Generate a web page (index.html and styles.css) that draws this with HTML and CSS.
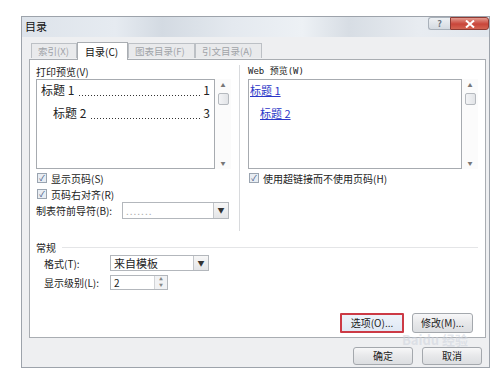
FILE: index.html
```html
<!DOCTYPE html>
<html lang="zh-CN">
<head>
  <meta charset="UTF-8">
  <title>目录</title>
  <link rel="stylesheet" href="styles.css">
</head>
<body>
  <div class="dialog">
    <div class="titlebar">
      <span class="title">目录</span>
      <div class="caption-btns">
        <span class="cap-help">?</span>
        <span class="cap-close">
          <svg width="10" height="8" viewBox="0 0 10 8"><path d="M1 0.5 L9 7.5 M9 0.5 L1 7.5" stroke="#fff" stroke-width="2"/></svg>
        </span>
      </div>
    </div>

    <div class="body">
      <div class="tabs">
        <span class="tab">索引(<u>X</u>)</span>
        <span class="tab active">目录(<u>C</u>)</span>
        <span class="tab">图表目录(<u>F</u>)</span>
        <span class="tab">引文目录(<u>A</u>)</span>
      </div>

      <div class="panel">
        <div class="previews">
          <div class="col col-left">
            <div class="label">打印预览(<u>V</u>)</div>
            <div class="preview-row">
              <div class="preview">
                <div class="toc-line">
                  <span>标题 1</span><span class="dots"></span><span>1</span>
                </div>
                <div class="toc-line lvl2">
                  <span>标题 2</span><span class="dots"></span><span>3</span>
                </div>
              </div>
              <div class="scrollbar">
                <span class="arrow">▲</span>
                <span class="thumb"></span>
                <span class="arrow down">▼</span>
              </div>
            </div>
            <div class="check"><span class="box">✓</span>显示页码(<u>S</u>)</div>
            <div class="check"><span class="box">✓</span>页码右对齐(<u>R</u>)</div>
            <div class="leader-row">
              <span class="field-label">制表符前导符(<u>B</u>):</span>
              <div class="select leader">
                <span class="value">.......</span>
                <span class="drop">▼</span>
              </div>
            </div>
          </div>

          <div class="col col-right">
            <div class="label">Web 预览(<u>W</u>)</div>
            <div class="preview-row">
              <div class="preview web">
                <div class="web-line"><a>标题 1</a></div>
                <div class="web-line lvl2"><a>标题 2</a></div>
              </div>
              <div class="scrollbar">
                <span class="arrow">▲</span>
                <span class="thumb"></span>
                <span class="arrow down">▼</span>
              </div>
            </div>
            <div class="check"><span class="box">✓</span>使用超链接而不使用页码(<u>H</u>)</div>
          </div>
        </div>

        <div class="group-title"><span>常规</span><span class="rule"></span></div>
        <div class="field-row">
          <span class="field-label short">格式(<u>T</u>):</span>
          <div class="select format">
            <span class="value">来自模板</span>
            <span class="drop">▼</span>
          </div>
        </div>
        <div class="field-row level">
          <span class="field-label short">显示级别(<u>L</u>):</span>
          <div class="spin">
            <span class="value">2</span>
            <span class="spin-btns"><i>▲</i><i>▼</i></span>
          </div>
        </div>

        <div class="panel-btns">
          <span class="btn btn-options">选项(<u>O</u>)...</span>
          <span class="btn">修改(<u>M</u>)...</span>
        </div>
      </div>

      <div class="footer">
        <span class="btn btn-wide">确定</span>
        <span class="btn btn-wide">取消</span>
      </div>
    </div>
    <span class="watermark">Baidu 经验</span>
  </div>
</body>
</html>
```

FILE: styles.css
```css
* {
  margin: 0;
  padding: 0;
  box-sizing: border-box;
}

body {
  background: #fff;
  font-family: "Noto Sans CJK SC", "DejaVu Sans", sans-serif;
  font-size: 10px;
  color: #222;
}

u {
  text-decoration: none;
}

.dialog {
  position: relative;
  margin: 16px 0 0 21px;
  width: 469px;
  height: 352px;
  border: 1px solid #9da3ab;
  background: #eeeff1;
  display: flex;
  flex-direction: column;
}

.titlebar {
  height: 20px;
  display: flex;
  align-items: flex-start;
  justify-content: space-between;
  background: linear-gradient(90deg, #dde3ea 0%, #e6ebf1 20%, #d3dae2 30%, #e4e9ef 45%, #edf1f5 60%, #d7dde4 70%, #e8ecf1 85%, #e1e7ee 100%);
}

.title {
  font-size: 11px;
  line-height: 18px;
  padding-left: 3px;
  color: #111;
}

.caption-btns {
  display: flex;
}

.cap-help {
  width: 22px;
  height: 13px;
  border: 1px solid #a9b1ba;
  border-right: none;
  border-radius: 3px 0 0 3px;
  background: linear-gradient(#eef1f4, #d4dae1);
  color: #6c7682;
  font-size: 9px;
  line-height: 11px;
  text-align: center;
  font-weight: bold;
}

.cap-close {
  width: 39px;
  height: 13px;
  border: 1px solid #8e3a33;
  border-radius: 0 3px 3px 0;
  background: linear-gradient(#e49b8f, #c9453a 55%, #d36452);
  display: flex;
  align-items: center;
  justify-content: center;
}

.body {
  flex: 1;
  display: flex;
  flex-direction: column;
  padding: 5px 2px 0 7px;
}

.tabs {
  display: flex;
  align-items: flex-end;
  height: 17px;
  padding-left: 2px;
  position: relative;
  z-index: 1;
}

.tab {
  height: 15px;
  padding: 0 0 0 6px;
  border: 1px solid #bcc0c5;
  border-bottom: none;
  background: #e9eaec;
  color: #a0a3a8;
  line-height: 14px;
  margin-bottom: 1px;
  white-space: nowrap;
  font-size: 9.5px;
}

.tab:nth-child(1) { width: 46px; }
.tab:nth-child(3) { width: 67px; }
.tab:nth-child(4) { width: 67px; }

.tab.active {
  width: 51px;
  height: 18px;
  background: #fff;
  color: #111;
  line-height: 17px;
  margin-bottom: -1px;
  padding-left: 7px;
  border-color: #a9adb2;
  font-size: 10px;
}

.panel {
  height: 279px;
  width: 457px;
  border: 1px solid #a9adb2;
  background: #fff;
  padding: 5px 7px 4px 6px;
  display: flex;
  flex-direction: column;
}

.previews {
  display: flex;
  height: 166px;
}

.col-left {
  width: 195px;
}

.col-right {
  margin-left: 8px;
  padding-left: 8px;
  border-left: 1px solid #d8dadd;
  flex: 1;
}

.label {
  height: 14px;
  line-height: 13px;
}

.col-right .label {
  font-family: "DejaVu Sans Mono", "Noto Sans CJK SC", monospace;
  font-size: 9px;
}

.preview-row {
  display: flex;
  height: 90px;
}

.preview {
  flex: 1;
  border: 1px solid #a7abb0;
  padding: 2px 4px 0 4px;
  overflow: hidden;
}

.toc-line {
  display: flex;
  font-size: 12px;
  line-height: 16px;
  height: 23px;
  white-space: nowrap;
}

.toc-line.lvl2 {
  padding-left: 12px;
}

.dots {
  flex: 1;
  height: 16px;
  margin: 0 1px 0 4px;
  background: radial-gradient(circle, #333 0.6px, transparent 0.9px) 0 12px / 3px 3px repeat-x;
}

.web-line {
  height: 23px;
  font-size: 11px;
  line-height: 16px;
}

.web-line a {
  color: #2b38c8;
  text-decoration: underline;
}

.web-line.lvl2 {
  padding-left: 10px;
}

.preview.web {
  padding-left: 1px;
}

.scrollbar {
  width: 16px;
  display: flex;
  flex-direction: column;
  align-items: center;
  background: #fbfbfb;
}

.arrow {
  font-size: 5px;
  color: #777;
  height: 12px;
  line-height: 12px;
}

.arrow.down {
  margin-top: auto;
}

.thumb {
  width: 11px;
  height: 12px;
  margin-top: 2px;
  border: 1px solid #b5b9be;
  border-radius: 2px;
  background: linear-gradient(90deg, #f3f4f6, #e2e4e7);
}

.check {
  display: flex;
  align-items: center;
  height: 14px;
  margin-top: 2px;
}

.box {
  width: 10px;
  height: 10px;
  border: 1px solid #9aa4b0;
  background: #e8edf3;
  color: #3b4e7a;
  font-size: 8px;
  line-height: 8px;
  text-align: center;
  margin: 0 4px 0 1px;
}

.leader-row {
  display: flex;
  align-items: center;
  height: 17px;
  margin-top: 1px;
}

.field-label {
  width: 86px;
}

.select,
.spin {
  display: flex;
  border: 1px solid #b3b7bc;
  background: #fff;
}

.select .value,
.spin .value {
  flex: 1;
  padding-left: 3px;
  line-height: 15px;
}

.leader {
  width: 107px;
  height: 17px;
}

.leader .value {
  color: #aaa;
  letter-spacing: 1px;
}

.drop {
  width: 15px;
  border-left: 1px solid #c2c5c9;
  background: linear-gradient(#f7f7f7, #e4e5e7);
  font-size: 7px;
  color: #333;
  text-align: center;
  line-height: 15px;
}

.group-title {
  display: flex;
  align-items: center;
  margin-top: 10px;
  height: 12px;
}

.rule {
  flex: 1;
  border-top: 1px solid #e4e5e7;
  margin-left: 6px;
}

.field-row {
  display: flex;
  align-items: center;
  margin-top: 2px;
  padding-left: 8px;
  height: 16px;
}

.field-row.level {
  margin-top: 4px;
  height: 15px;
}

.field-label.short {
  width: 66px;
}

.format {
  width: 99px;
  height: 16px;
}

.format .value {
  font-size: 11px;
}

.spin {
  width: 58px;
  height: 15px;
}

.spin .value {
  line-height: 13px;
}

.spin-btns {
  width: 13px;
  display: flex;
  flex-direction: column;
  border-left: 1px solid #d2d4d7;
  background: #f1f2f4;
}

.spin-btns i {
  font-style: normal;
  font-size: 4px;
  color: #888;
  text-align: center;
  line-height: 6px;
}

.panel-btns {
  margin-top: auto;
  display: flex;
  justify-content: flex-end;
  gap: 8px;
  padding-right: 5px;
}

.btn {
  height: 20px;
  width: 61px;
  border: 1px solid #a4a8ad;
  border-radius: 3px;
  background: linear-gradient(#f7f7f8, #e7e8ea 50%, #dcdee1);
  text-align: center;
  line-height: 18px;
  color: #222;
}

.btn-options {
  width: 64px;
  border: 2px solid #cc3a45;
  border-radius: 1px;
  line-height: 16px;
  background: linear-gradient(#eef3fa, #dfe8f4);
}

.footer {
  display: flex;
  justify-content: flex-end;
  gap: 9px;
  padding: 9px 5px 0 0;
}

.btn-wide {
  width: 60px;
  height: 18px;
  line-height: 16px;
}

.watermark {
  position: absolute;
  left: 380px;
  top: 316px;
  font-size: 13px;
  line-height: 13px;
  font-weight: bold;
  color: rgba(205, 210, 220, 0.55);
  pointer-events: none;
}
```
